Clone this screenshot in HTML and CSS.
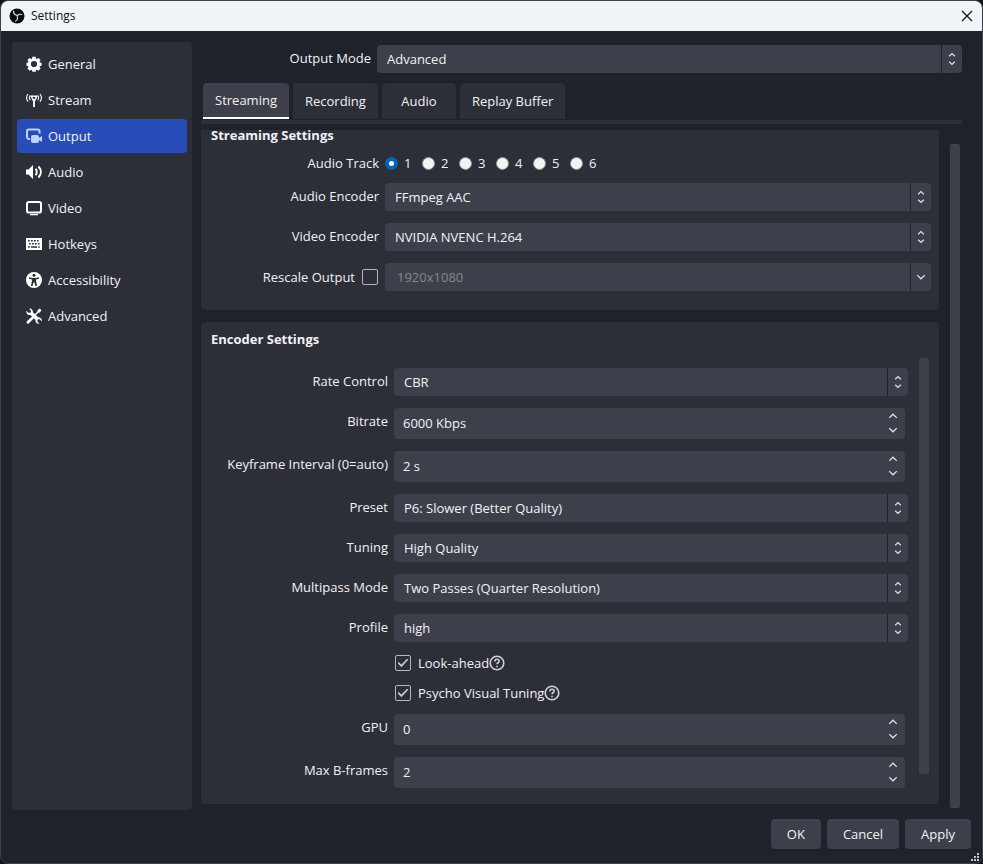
FILE: index.html
```html
<!DOCTYPE html>
<html lang="en">
<head>
    <meta charset="UTF-8">
    <meta name="viewport" content="width=device-width, initial-scale=1">
    <title>Settings</title>
    <link rel="stylesheet" href="styles.css">
</head>
<body>

<!-- shared icons -->
<svg class="sprite" aria-hidden="true">
    <symbol id="updown" viewBox="0 0 8 14">
        <path d="M1.2 4.2 4 1.6l2.8 2.6M1.2 9.8 4 12.4l2.8-2.6"/>
    </symbol>
    <symbol id="up" viewBox="0 0 10 6">
        <path d="M1.2 4.9 5 1.2l3.8 3.7"/>
    </symbol>
    <symbol id="down" viewBox="0 0 10 6">
        <path d="M1.2 1.1 5 4.8l3.8-3.7"/>
    </symbol>
    <symbol id="help" viewBox="0 0 16 16">
        <circle cx="8" cy="8" r="6.8"/>
        <path d="M5.9 6.4c0-1.3.9-2.1 2.1-2.1s2.1.8 2.1 1.9c0 1.5-2.1 1.6-2.1 3.1M8 10.7v1.5"/>
    </symbol>
</svg>

<div class="window">
    <header class="titlebar">
        <svg class="logo" viewBox="0 0 16 16" aria-hidden="true">
            <circle cx="8" cy="8" r="7.5"/>
            <path d="M4.6 2.800c-.3 2.400 1 4.100 3.400 4.500M13.300 6.800c-2.200-1-4.200-.6-5.100 1.400M6.300 13.200c2.100-1 2.900-2.800 1.700-5"/>
        </svg>
        <h1>Settings</h1>
        <button class="close" type="button" aria-label="Close">
            <svg viewBox="0 0 12 12"><path d="M1 1l10 10M11 1L1 11"/></svg>
        </button>
    </header>

    <div class="content">
        <nav class="sidebar">
            <a href="#general">
                <svg viewBox="0 0 16 16"><path fill-rule="evenodd" d="M6.4.8h3.2l.4 1.9.7.3 1.7-1.1 2.2 2.2-1.1 1.7.3.7 1.7.3v3l-1.7.4-.3.8 1.1 1.6-2.2 2.2-1.7-1-.7.3-.4 1.7H6.4L6 14.1l-.7-.3-1.7 1-2.2-2.2 1.1-1.6-.3-.8L.5 9.8v-3l1.700-.3.3-.7-1.100-1.700 2.200-2.200 1.700 1.100.7-.3zM8 4.900a3.100 3.100 0 1 0 0 6.200 3.100 3.100 0 0 0 0-6.200z"/></svg>
                General
            </a>
            <a href="#stream">
                <svg class="line" viewBox="0 0 16 16"><path d="M8 7v8" stroke-width="1.8"/><path d="M5.300 4.300h5.400L8.900 8H7.100z" stroke-width="1.500"/><path d="M4.200 3.500c-1 1.500-1 3.200 0 4.700M2 2c-1.900 2.500-1.900 5.100 0 7.600M11.800 3.500c1 1.500 1 3.200 0 4.700M14 2c1.900 2.500 1.900 5.100 0 7.600" stroke-width="1.1"/></svg>
                Stream
            </a>
            <a href="#output" class="active">
                <svg viewBox="0 0 16 16"><path class="stroke" d="M4 11H2.800A1.900 1.900 0 0 1 1 9.200V3.300c0-1 .8-1.800 1.800-1.800h8.900c1 0 1.800.8 1.800 1.800v2.200"/><rect x="5" y="7" width="8" height="8" rx="2"/><path d="M12.500 10.300 16 8v6l-3.500-2.200z"/></svg>
                Output
            </a>
            <a href="#audio">
                <svg viewBox="0 0 16 16"><path d="M0 5.500h2.500L7 1v14l-4.500-4.500H0z"/><path class="stroke" d="M9.700 4.800c1.300 2 1.300 4.400 0 6.400M12.500 2.500c3.100 3.300 3.100 7.700 0 11"/></svg>
                Audio
            </a>
            <a href="#video">
                <svg class="line" viewBox="0 0 16 16"><rect x="1" y="2" width="14" height="10.500" rx="1.800"/><path d="M4 14.600h8" stroke-width="1.2"/></svg>
                Video
            </a>
            <a href="#hotkeys">
                <svg viewBox="0 0 16 16"><path fill-rule="evenodd" d="M0 2h16v12H0zM2 4v1.600h1.700V4zm3 0v1.600h1.700V4zm3 0v1.600h1.700V4zm3 0v1.600h1.500V4zM3 7v1.600h1.700V7zm3 0v1.600h1.700V7zm3 0v1.600h1.700V7zm3 0v1.600h1.500V7zM2 10.200v1.600h1.700v-1.600zm3 0v1.600h6v-1.600zm7.200 0v1.600h1.500v-1.600z"/></svg>
                Hotkeys
            </a>
            <a href="#accessibility">
                <svg viewBox="0 0 16 16"><circle cx="8" cy="8" r="8"/><g class="cut"><circle cx="8" cy="3.300" r="1.500"/><path d="M3 5.200 6.500 6h3l3.500-.8v1.600l-3 .8.200 2.200.9 4.200H9.500L8.400 10.500h-.8L6.500 14H4.900l.9-4.200L6 7.600l-3-.8z"/></g></svg>
                Accessibility
            </a>
            <a href="#advanced">
                <svg viewBox="0 0 16 16"><path d="M.5 2.800 2.800 5 4.800 4.600 5 2.800 3 .6C5 0 7.100 1.500 6.900 4.300l5.300 4.900c2.100-.2 4 1.500 3.700 4.200L13.600 11.200l-1.900.4-.4 1.900 2.200 2.200c-2.200.6-4.300-1-4-3.700L4.400 7C1.700 7.200 0 5.200.5 2.800z"/><path d="M15.400 2.200 13.800.6l-2.300 1.600-.2 1.500-3.100 3.100 1 1 3.100-3.100 1.500-.2zM6.100 8.600 1 13.300a1.400 1.400 0 0 0 2 2l4.900-5z"/></svg>
                Advanced
            </a>
        </nav>

        <main class="main">
            <div class="row">
                <label for="outputMode">Output Mode</label>
                <div class="combo">
                    <select id="outputMode"><option>Advanced</option><option>Simple</option></select>
                    <span class="arrow"><svg class="updown"><use href="#updown"/></svg></span>
                </div>
            </div>

            <div class="tabs" role="tablist">
                <button type="button" role="tab" aria-selected="true">Streaming</button>
                <button type="button" role="tab" aria-selected="false">Recording</button>
                <button type="button" role="tab" aria-selected="false">Audio</button>
                <button type="button" role="tab" aria-selected="false">Replay Buffer</button>
            </div>

            <div class="scroll-area">
                <div class="panels">
                    <section class="panel streaming">
                        <h2>Streaming Settings</h2>
                        <div class="row tracks" role="radiogroup" aria-labelledby="trackLabel">
                            <span class="label" id="trackLabel">Audio Track</span>
                            <div class="radios">
                                <label><input type="radio" name="track" checked>1</label>
                                <label><input type="radio" name="track">2</label>
                                <label><input type="radio" name="track">3</label>
                                <label><input type="radio" name="track">4</label>
                                <label><input type="radio" name="track">5</label>
                                <label><input type="radio" name="track">6</label>
                            </div>
                        </div>
                        <div class="row">
                            <label for="audioEncoder">Audio Encoder</label>
                            <div class="combo">
                                <select id="audioEncoder"><option>FFmpeg AAC</option></select>
                                <span class="arrow"><svg class="updown"><use href="#updown"/></svg></span>
                            </div>
                        </div>
                        <div class="row">
                            <label for="videoEncoder">Video Encoder</label>
                            <div class="combo">
                                <select id="videoEncoder"><option>NVIDIA NVENC H.264</option></select>
                                <span class="arrow"><svg class="updown"><use href="#updown"/></svg></span>
                            </div>
                        </div>
                        <div class="row">
                            <label class="rescale">Rescale Output <input type="checkbox"></label>
                            <div class="combo">
                                <select aria-label="Rescale resolution" disabled><option>1920x1080</option></select>
                                <span class="arrow"><svg class="chevron"><use href="#down"/></svg></span>
                            </div>
                        </div>
                    </section>

                    <section class="panel encoder">
                        <h2>Encoder Settings</h2>
                        <div class="encoder-body">
                            <div class="fields">
                                <div class="row">
                                    <label for="rateControl">Rate Control</label>
                                    <div class="combo">
                                        <select id="rateControl"><option>CBR</option></select>
                                        <span class="arrow"><svg class="updown"><use href="#updown"/></svg></span>
                                    </div>
                                </div>
                                <div class="row">
                                    <label for="bitrate">Bitrate</label>
                                    <div class="spin">
                                        <input type="text" id="bitrate" value="6000 Kbps">
                                        <div class="steps">
                                            <button type="button" aria-label="Increase"><svg class="chevron"><use href="#up"/></svg></button>
                                            <button type="button" aria-label="Decrease"><svg class="chevron"><use href="#down"/></svg></button>
                                        </div>
                                    </div>
                                </div>
                                <div class="row">
                                    <label for="keyframe">Keyframe Interval (0=auto)</label>
                                    <div class="spin">
                                        <input type="text" id="keyframe" value="2 s">
                                        <div class="steps">
                                            <button type="button" aria-label="Increase"><svg class="chevron"><use href="#up"/></svg></button>
                                            <button type="button" aria-label="Decrease"><svg class="chevron"><use href="#down"/></svg></button>
                                        </div>
                                    </div>
                                </div>
                                <div class="row">
                                    <label for="preset">Preset</label>
                                    <div class="combo">
                                        <select id="preset"><option>P6: Slower (Better Quality)</option></select>
                                        <span class="arrow"><svg class="updown"><use href="#updown"/></svg></span>
                                    </div>
                                </div>
                                <div class="row">
                                    <label for="tuning">Tuning</label>
                                    <div class="combo">
                                        <select id="tuning"><option>High Quality</option></select>
                                        <span class="arrow"><svg class="updown"><use href="#updown"/></svg></span>
                                    </div>
                                </div>
                                <div class="row">
                                    <label for="multipass">Multipass Mode</label>
                                    <div class="combo">
                                        <select id="multipass"><option>Two Passes (Quarter Resolution)</option></select>
                                        <span class="arrow"><svg class="updown"><use href="#updown"/></svg></span>
                                    </div>
                                </div>
                                <div class="row">
                                    <label for="profile">Profile</label>
                                    <div class="combo">
                                        <select id="profile"><option>high</option></select>
                                        <span class="arrow"><svg class="updown"><use href="#updown"/></svg></span>
                                    </div>
                                </div>
                                <div class="row">
                                    <label class="check"><input type="checkbox" checked><span>Look-ahead</span><svg class="help"><use href="#help"/></svg></label>
                                </div>
                                <div class="row">
                                    <label class="check"><input type="checkbox" checked><span>Psycho Visual Tuning</span><svg class="help"><use href="#help"/></svg></label>
                                </div>
                                <div class="row">
                                    <label for="gpu">GPU</label>
                                    <div class="spin">
                                        <input type="text" id="gpu" value="0">
                                        <div class="steps">
                                            <button type="button" aria-label="Increase"><svg class="chevron"><use href="#up"/></svg></button>
                                            <button type="button" aria-label="Decrease"><svg class="chevron"><use href="#down"/></svg></button>
                                        </div>
                                    </div>
                                </div>
                                <div class="row">
                                    <label for="bframes">Max B-frames</label>
                                    <div class="spin">
                                        <input type="text" id="bframes" value="2">
                                        <div class="steps">
                                            <button type="button" aria-label="Increase"><svg class="chevron"><use href="#up"/></svg></button>
                                            <button type="button" aria-label="Decrease"><svg class="chevron"><use href="#down"/></svg></button>
                                        </div>
                                    </div>
                                </div>
                            </div>
                            <div class="scrollbar"></div>
                        </div>
                    </section>
                </div>
                <div class="scrollbar"></div>
            </div>
        </main>
    </div>

    <footer class="footer">
        <button type="button">OK</button>
        <button type="button">Cancel</button>
        <button type="button">Apply</button>
    </footer>

    <svg class="grip" viewBox="0 0 8 8" aria-hidden="true">
        <path d="M6 0h2v2H6zM3 3h2v2H3zM6 3h2v2H6zM0 6h2v2H0zM3 6h2v2H3zM6 6h2v2H6z"/>
    </svg>
</div>

</body>
</html>
```
FILE: styles.css
```css
:root {
    --bg: #1f222a;
    --panel: #2c2e38;
    --control: #3d404a;
    --text: #f2f2f4;
    --primary: #284cb8;
}
* {
    box-sizing: border-box;
}
body {
    margin: 0;
    background: #14151a;
    color: var(--text);
    font-family: "Open Sans", "Noto Sans", sans-serif;
    font-size: 13px;
    line-height: 18px;
}
button,
input,
select {
    margin: 0;
    border: 0;
    color: inherit;
    font: inherit;
}
h1,
h2 {
    margin: 0;
}
svg {
    display: block;
    flex: none;
}
.sprite {
    position: absolute;
    width: 0;
    height: 0;
}
.window {
    position: relative;
    display: flex;
    flex-direction: column;
    min-height: 100vh;
    background: var(--bg);
    border: 1px solid #3f4047;
    border-radius: 8px;
    overflow: hidden;
}

/* title bar */
.titlebar {
    display: flex;
    align-items: center;
    height: 30px;
    padding: 0 9px 0 8px;
    background: #f0f4f9;
    color: #111;
}
.titlebar h1 {
    flex: 1;
    margin-left: 6px;
    font-family: "Open Sans", "Noto Sans", sans-serif;
    font-size: 12px;
    font-weight: 400;
}
.logo {
    width: 16px;
    height: 16px;
    fill: #0c0c0e;
}
.logo path {
    fill: none;
    stroke: #d5d8dc;
    stroke-width: 1.2;
}
.close {
    padding: 0;
    background: none;
}
.close svg {
    width: 12px;
    height: 12px;
    stroke: #111;
    stroke-width: 1.2;
}

.content {
    display: flex;
    flex: 1;
    gap: 9px;
    padding: 11px 20px 0 11px;
}

/* sidebar */
.sidebar {
    display: flex;
    flex-direction: column;
    flex: none;
    gap: 2px;
    width: 180px;
    padding: 5px;
    background: var(--panel);
    border-radius: 4px;
}
.sidebar a {
    display: flex;
    align-items: center;
    gap: 6px;
    height: 34px;
    padding: 0 9px;
    border-radius: 4px;
    color: inherit;
    text-decoration: none;
}
.sidebar a.active {
    background: var(--primary);
}
.sidebar svg {
    width: 16px;
    height: 16px;
    fill: #fff;
}
.sidebar .active svg {
    fill: #bcd4fa;
}
.sidebar .line,
.sidebar .stroke {
    fill: none;
    stroke: #fff;
    stroke-width: 2;
}
.sidebar .active .stroke {
    stroke: #bcd4fa;
}
.sidebar .cut {
    fill: var(--panel);
}

/* form rows */
.main {
    flex: 1;
    min-width: 0;
    padding-top: 3px;
}
.main > .row {
    padding-left: 2px;
}
.row {
    display: grid;
    grid-template-columns: 168px 1fr;
    column-gap: 6px;
}
.row > label,
.row > .label {
    line-height: 26px;
    text-align: right;
    white-space: nowrap;
}
.combo {
    position: relative;
}
.combo select {
    display: block;
    width: 100%;
    height: 28px;
    padding: 0 30px 0 10px;
    appearance: none;
    background: var(--control);
    border-radius: 4px;
}
.combo select:disabled {
    padding-left: 12px;
    color: #85878d;
    opacity: 1;
}
.arrow {
    position: absolute;
    top: 0;
    right: 0;
    bottom: 0;
    display: flex;
    align-items: center;
    justify-content: center;
    width: 21px;
    border-left: 1px solid var(--bg);
    pointer-events: none;
}
.updown,
.chevron {
    fill: none;
    stroke: #e0e1e5;
    stroke-width: 1.3;
}
.updown {
    width: 8px;
    height: 14px;
}
.chevron {
    width: 10px;
    height: 6px;
}
.spin {
    display: flex;
    height: 31px;
    margin-right: 3px;
    background: var(--control);
    border-radius: 4px;
}
.spin input {
    flex: 1;
    min-width: 0;
    padding: 0 9px 1px;
    background: none;
}
.steps {
    display: flex;
    flex-direction: column;
    justify-content: center;
    gap: 2px;
    width: 24px;
    padding-bottom: 1px;
}
.steps button {
    display: flex;
    align-items: center;
    justify-content: center;
    height: 12px;
    padding: 0;
    background: none;
}

input[type="checkbox"] {
    display: grid;
    place-content: center;
    flex: none;
    width: 16px;
    height: 16px;
    appearance: none;
    border: 1px solid #b4b6bc;
    border-radius: 2px;
}
input[type="checkbox"]:checked::before {
    content: "";
    width: 11px;
    height: 9px;
    background: #c0c2c7;
    clip-path: polygon(0 52%, 11% 40%, 35% 66%, 89% 0, 100% 11%, 36% 96%);
}
input[type="radio"] {
    width: 13px;
    height: 13px;
    appearance: none;
    background: #f3f3f3;
    border: 1px solid #8f9094;
    border-radius: 50%;
}
input[type="radio"]:checked {
    background: #fff;
    border: 4px solid #0a63b4;
}

/* tabs */
.tabs {
    display: flex;
    gap: 4px;
    margin-top: 10px;
    padding: 0 0 1px 2px;
    border-bottom: 4px solid var(--panel);
}
.tabs button {
    min-width: 74px;
    height: 36px;
    padding: 0 12px;
    background: var(--panel);
    border-radius: 4px 4px 0 0;
}
.tabs button[aria-selected="true"] {
    background: var(--control);
    border-bottom: 2px solid #fff;
}

/* settings panels */
.scroll-area {
    display: flex;
    gap: 11px;
    margin: 6px 2px 2px 0;
}
.panels {
    flex: 1;
    min-width: 0;
    padding-bottom: 4px;
}
.scrollbar {
    flex: none;
    width: 10px;
    background: var(--control);
    border-radius: 2px;
}
.scroll-area > .scrollbar {
    margin-top: 14px;
}
.panel {
    padding-left: 10px;
    background: var(--panel);
    border-radius: 4px;
}
.panel h2 {
    font-size: 13px;
    font-weight: 700;
}
.streaming {
    display: grid;
    row-gap: 12px;
    padding-right: 8px;
    padding-bottom: 19px;
    border-radius: 0 0 4px 4px;
}
.streaming h2 {
    line-height: 10px;
}
.tracks {
    margin-top: -2px;
    margin-bottom: -5px;
}
.radios {
    display: flex;
}
.radios label {
    display: flex;
    align-items: center;
    gap: 6px;
    width: 37px;
}
.row > .rescale {
    display: flex;
    align-items: center;
    justify-content: flex-end;
    gap: 7px;
    padding-right: 1px;
}
.encoder {
    margin-top: 12px;
    padding-top: 8px;
    padding-right: 10px;
    padding-bottom: 16px;
}
.encoder .row {
    grid-template-columns: 177px 1fr;
}
.encoder-body {
    display: flex;
    gap: 11px;
    padding-top: 10px;
}
.encoder-body .scrollbar {
    margin-bottom: 14px;
}
.fields {
    display: grid;
    flex: 1;
    row-gap: 12px;
    min-width: 0;
    padding-top: 10px;
}
.row > .check {
    grid-column: 2;
    display: flex;
    align-items: center;
    padding-left: 1px;
    line-height: 18px;
}
.check span {
    margin-left: 7px;
}
.help {
    width: 16px;
    height: 16px;
    fill: none;
    stroke: #d0d2d6;
    stroke-width: 1.6;
}

/* dialog buttons */
.footer {
    display: flex;
    justify-content: flex-end;
    gap: 6px;
    padding: 9px 11px 14px;
}
.footer button {
    height: 30px;
    padding: 0 16px;
    background: var(--control);
    border-radius: 4px;
}
.grip {
    position: absolute;
    right: 3px;
    bottom: 2px;
    width: 8px;
    height: 8px;
    fill: #c4c5c9;
}
```
